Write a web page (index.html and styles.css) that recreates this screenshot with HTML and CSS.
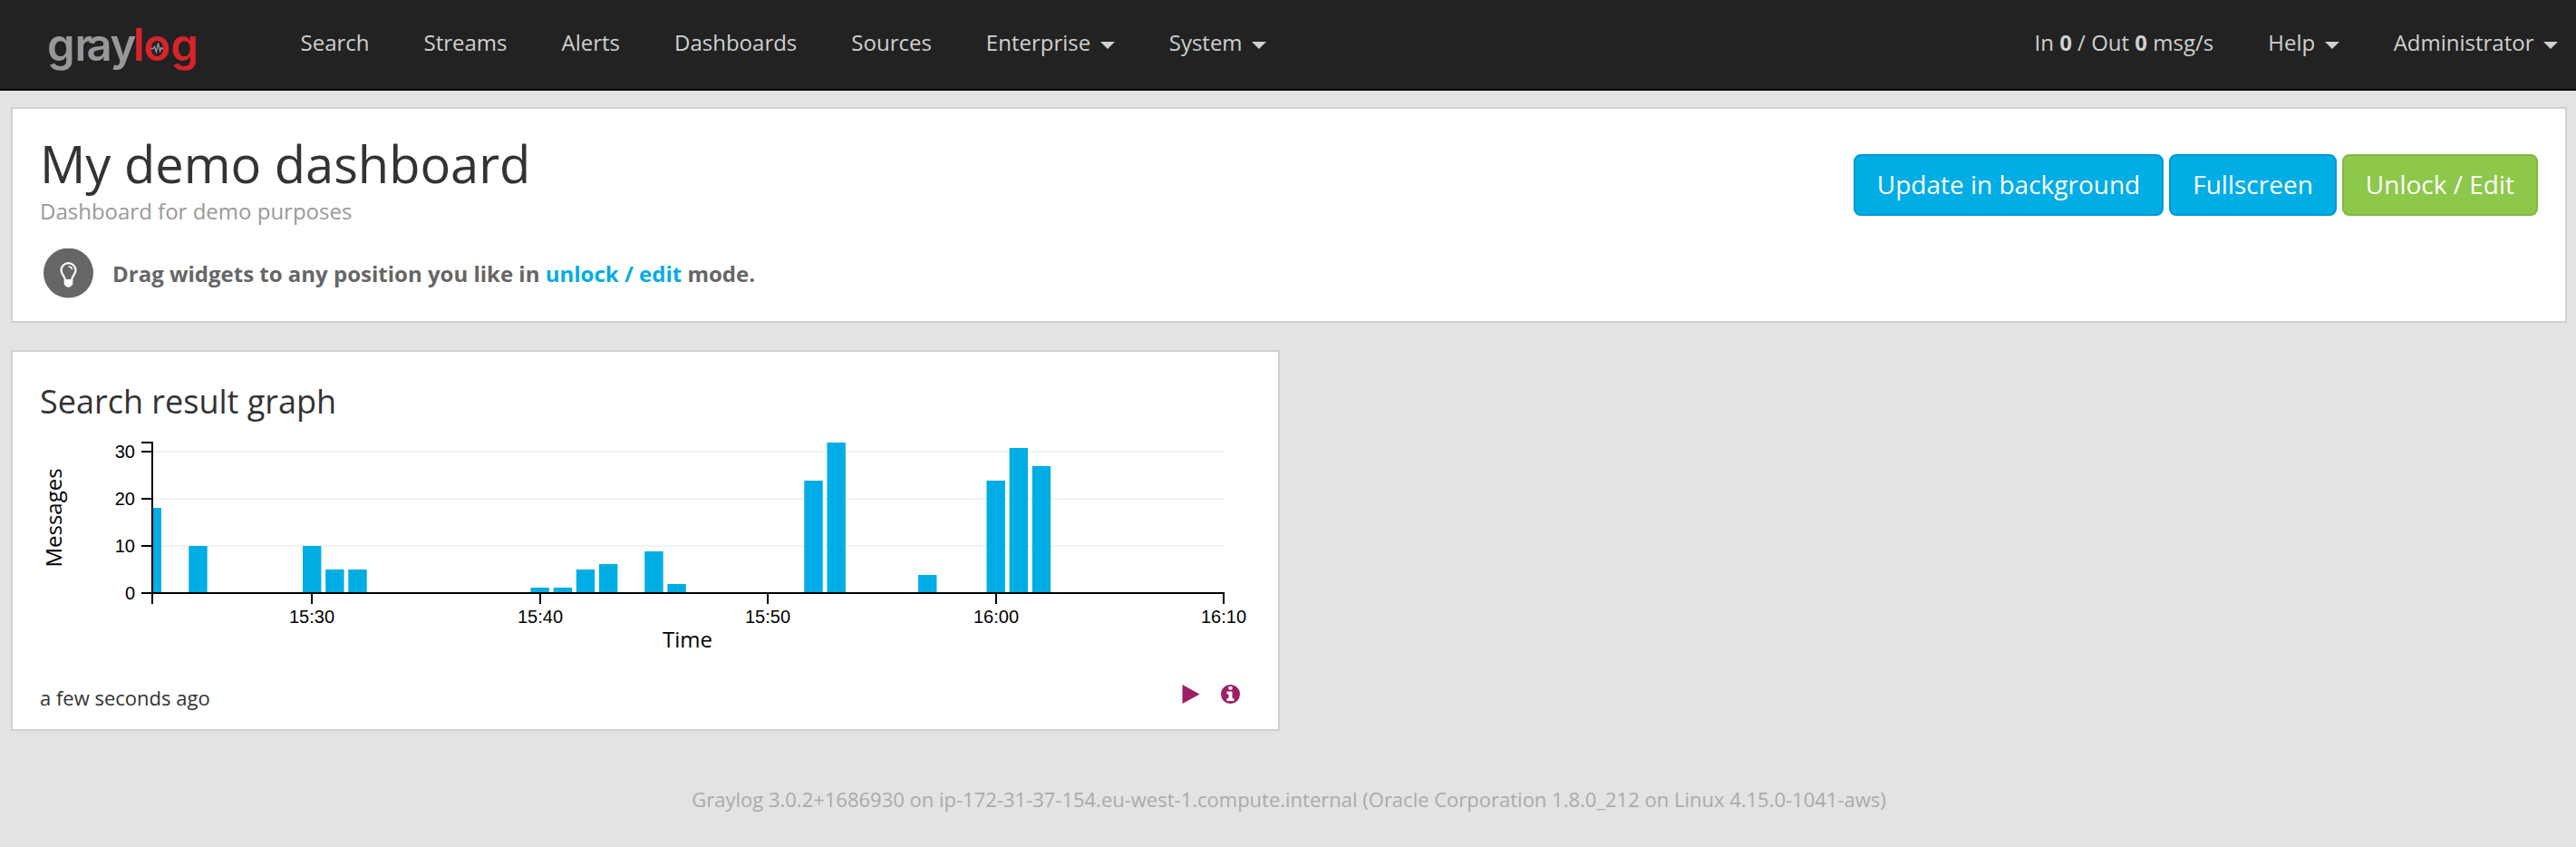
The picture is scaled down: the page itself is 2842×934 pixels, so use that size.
FILE: index.html
```html
<!DOCTYPE html>
<html lang="en">
<head>
<meta charset="utf-8">
<title>My demo dashboard</title>
<link rel="stylesheet" href="styles.css">
</head>
<body>
<header class="navbar">
  <a class="brand">
    <svg class="logo" width="168" height="60" viewBox="0 0 168 60">
      <text class="logo-gray" x="-2 28.500 41.500 67.500" y="43">gray</text>
      <text class="logo-red" x="93 104.500 134.500" y="43">log</text>
      <path class="logo-pulse" d="M112.500 29.500h2.500l1.500-2 2 6 2-10 2 9 1.500-4 1 1h1"/>
    </svg>
  </a>
  <nav class="nav">
    <a>Search</a>
    <a>Streams</a>
    <a>Alerts</a>
    <a>Dashboards</a>
    <a>Sources</a>
    <a>Enterprise<i class="caret"></i></a>
    <a>System<i class="caret"></i></a>
  </nav>
  <nav class="nav nav-right">
    <a>In <b>0</b> / Out <b>0</b> msg/s</a>
    <a>Help<i class="caret"></i></a>
    <a>Administrator<i class="caret"></i></a>
  </nav>
</header>
<main class="content">
  <section class="card page-header">
    <div>
      <h1>My demo dashboard</h1>
      <p class="description">Dashboard for demo purposes</p>
      <p class="hint">
        <svg class="bulb" width="56" height="56" viewBox="0 0 56 56">
          <circle cx="27.500" cy="27" r="27.500" fill="#666"/>
          <path d="M24 35c0-4.500-4.500-6-4.500-11a8 7.800 0 0 1 16 0c0 5-4.500 6.500-4.500 11z" fill="none" stroke="#fff" stroke-width="2.200"/>
          <path d="M27.500 20q4 0 4 3.500" fill="none" stroke="#fff" stroke-width="1.300"/>
          <path d="M22.700 34h9.600v5.500l-1.800 2q-3 2.500-6 0l-1.800-2z" fill="#fff"/>
        </svg>
        <span>Drag widgets to any position you like in <a>unlock / edit</a> mode.</span>
      </p>
    </div>
    <div class="actions">
      <button class="btn">Update in background</button>
      <button class="btn">Fullscreen</button>
      <button class="btn btn-green">Unlock / Edit</button>
    </div>
  </section>
  <section class="card widget">
    <h2>Search result graph</h2>
    <svg class="chart" width="1360" height="250" viewBox="0 0 1360 250">
      <g class="grid"><path d="M124 21H1306M124 73H1306M124 125H1306"/></g>
      <g class="bars" id="bars"></g>
      <path class="axis" d="M112 11H124M112 21H124M112 73H124M112 125H124M112 177H1307M124 10V189M300 177V189M552 177V189M803 177V189M1055 177V189M1306 177V189"/>
      <g class="ticks-y"><text x="105" y="28">30</text><text x="105" y="80">20</text><text x="105" y="132">10</text><text x="105" y="184">0</text></g>
      <g class="ticks-x"><text x="300" y="210">15:30</text><text x="552" y="210">15:40</text><text x="803" y="210">15:50</text><text x="1055" y="210">16:00</text><text x="1306" y="210">16:10</text></g>
      <text class="label" x="714.500" y="237">Time</text>
      <text class="label" transform="translate(24 94) rotate(-90)">Messages</text>
    </svg>
    <footer class="widget-footer">
      <span>a few seconds ago</span>
      <svg class="icons" width="68" height="24" viewBox="0 0 68 24">
        <path d="M2.500 1L21.500 11.500L2.500 22z"/>
        <circle cx="55.500" cy="11.500" r="10.500"/>
        <path fill="#fff" d="M53.500 3h4v3.500h-4zM51.500 8.500h6v7.500h2v3h-8v-3h2v-4.500h-2z"/>
      </svg>
    </footer>
  </section>
  <footer class="page-footer">Graylog 3.0.2+1686930 on ip-172-31-37-154.eu-west-1.compute.internal (Oracle Corporation 1.8.0_212 on Linux 4.15.0-1041-aws)</footer>
</main>
<script src="chart.js"></script>
</body>
</html>
```
FILE: chart.js
```js
// Minutes relative to 15:30 and the message count in each.
const counts = [[-5, 10], [0, 10], [1, 5], [2, 5], [10, 1], [11, 1], [12, 5], [13, 6], [15, 9], [16, 2],
  [22, 24], [23, 32], [27, 4], [30, 24], [31, 31], [32, 27]];
const group = document.getElementById('bars');
function bar(x, width, count) {
  const r = document.createElementNS('http://www.w3.org/2000/svg', 'rect');
  const h = count === 31 ? 160 : Math.round(count * 2.6) * 2;
  r.setAttribute('x', x);
  r.setAttribute('y', 177 - h);
  r.setAttribute('width', width);
  r.setAttribute('height', h);
  group.appendChild(r);
}
bar(124, 10, 18);
counts.forEach(([minute, count]) => bar(290 + minute * 25.15, 20.4, count));
```
FILE: styles.css
```css
* { box-sizing: border-box; }
body { margin: 0; background: #e3e3e3; color: #333; font-family: "Open Sans", sans-serif; font-size: 24px; line-height: 34px; }
h1, h2, p { margin: 0; font-weight: 400; }
.navbar { height: 100px; background: #222; border-bottom: 2px solid #080808; display: flex; padding-left: 54px; padding-right: 20px; color: #d0d0d0; }
.brand { width: 247.5px; padding-top: 24px; }
.logo { display: block; overflow: visible; }
.logo text { font-family: Inter, sans-serif; font-weight: 600; font-size: 49px; }
.logo-gray { fill: #96989b; }
.logo-red { fill: #d8232a; }
.logo-pulse { fill: none; stroke: #96989b; stroke-width: 1.3; }
.nav { display: flex; gap: 60px; padding: 30px 0 0 30px; white-space: nowrap; }
.nav-right { margin-left: auto; padding-left: 0; }
.caret { display: inline-block; margin-left: 10.5px; border: 8px solid transparent; border-top-color: currentColor; border-bottom: 0; vertical-align: 2px; }
.content { padding: 18px 10px 0 12px; }
.card { background: #fff; border: 2px solid #d0d0d0; }
.page-header { height: 238px; padding: 29px 30px 0; display: flex; justify-content: space-between; }
h1 { font-size: 56px; line-height: 62px; }
.description { color: #999; line-height: 34px; margin-top: 5px; }
.hint { display: flex; align-items: center; gap: 21px; padding-left: 4px; margin-top: 24px; color: #666; font-weight: 700; }
.bulb { margin-right: -1px; }
.hint a { color: #00ade3; }
.actions { display: flex; gap: 6px; padding-top: 21px; }
.btn { height: 68px; padding: 0 24px 2px; border: 2px solid #0099cf; border-radius: 8px; background: #00ade4; color: #fff; font: 28px "Open Sans", sans-serif; }
.btn-green { background: #8dc84b; border-color: #80b940; }
.widget { width: 1400px; height: 420px; margin-top: 30px; padding: 30px 30px 0; }
h2 { font-size: 36px; line-height: 50px; }
.chart { display: block; margin: 9px 0 0 0; overflow: visible; }
.grid { stroke: #f2f2f2; stroke-width: 2; }
.bars { fill: #00ade4; }
.axis { stroke: #000; stroke-width: 2; fill: none; }
.chart text { fill: #000; font-family: "Liberation Sans", Arial, sans-serif; font-size: 20px; text-anchor: middle; }
.ticks-y text { text-anchor: end; }
.chart .label { font-family: "Open Sans", sans-serif; font-size: 24px; }
.widget-footer { display: flex; justify-content: space-between; align-items: flex-start; margin-top: 25px; font-size: 22px; }
.icons { fill: #9e1f63; margin: 2px 10px 0 0; }
.page-footer { margin-top: 58px; text-align: center; color: #aaa; font-size: 22px; }
```
